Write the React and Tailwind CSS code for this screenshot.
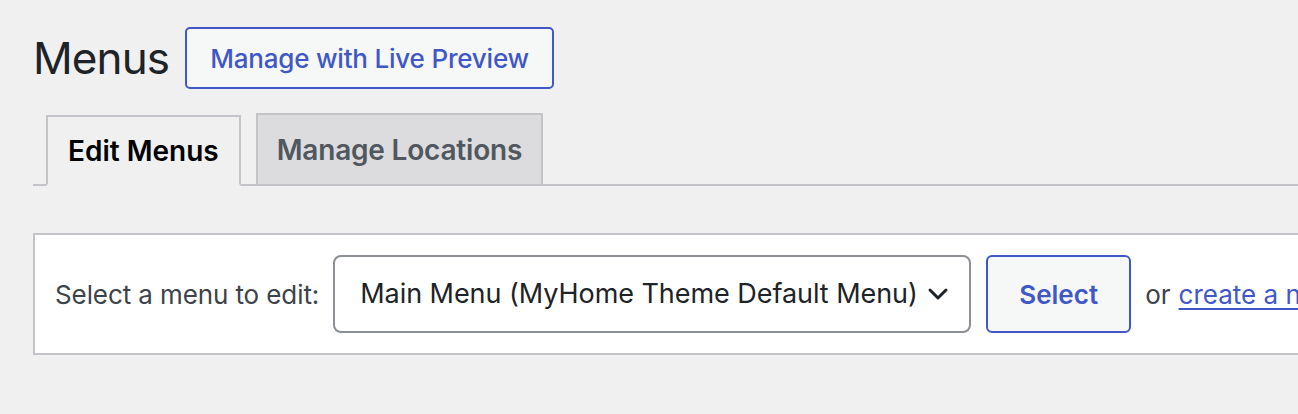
export default function App() {
    return (
        <div className="h-[414px] w-full overflow-hidden bg-[#f0f0f1] pl-[33px] text-[#1d2327]" style={{ fontFamily: 'Inter, "Noto Sans", sans-serif' }}>
            <div className="flex items-center pt-[27px]">
                <h1 className="text-[44px] font-normal leading-none tracking-[-0.9px] text-[#1d2327]">Menus</h1>
                <button className="ml-[16px] h-[62px] shrink-0 rounded-[5px] border-2 border-[#3f57c7] bg-[#f6f7f7] px-[23px] text-[26px] font-medium tracking-[-0.2px] text-[#3f57c7]">
                    Manage with Live Preview
                </button>
            </div>

            <div className="mt-[24px] flex items-end gap-[15px] border-b-2 border-[#c3c4c7] pl-[13px]">
                <div className="-mb-[2px] flex h-[71px] items-center border-2 border-b-2 border-[#c3c4c7] border-b-[#f0f0f1] bg-[#f0f0f1] px-[20px] text-[28px] font-semibold text-black">
                    Edit Menus
                </div>
                <div className="flex h-[71px] items-center border-2 border-b-0 border-[#c3c4c7] bg-[#dcdcde] px-[19px] text-[28px] font-semibold tracking-[-0.2px] text-[#50575e]">
                    Manage Locations
                </div>
            </div>

            <div className="mt-[47px] flex w-[1400px] items-center border-2 border-[#c3c4c7] bg-white py-[20px] pl-[20px] whitespace-nowrap">
                <span className="shrink-0 text-[26px] tracking-[-0.1px] text-[#3c434a]">Select a menu to edit:</span>
                <div className="ml-[14px] flex h-[78px] w-[638px] shrink-0 items-center justify-between rounded-[8px] border-2 border-[#8c8f94] pl-[25px] pr-[20px] text-[27px] tracking-[-0.05px] text-[#1d2327]">
                    <span>Main Menu (MyHome Theme Default Menu)</span>
                    <svg className="shrink-0" width="22" height="14" viewBox="0 0 22 14" fill="none" stroke="#1d2327" strokeWidth="3" strokeLinecap="round" strokeLinejoin="round">
                        <path d="M3 3l8 8 8-8" />
                    </svg>
                </div>
                <button className="ml-[15px] h-[78px] w-[145px] shrink-0 rounded-[6px] border-2 border-[#3f57c7] bg-[#f6f7f7] text-[26px] font-semibold text-[#3f57c7]">
                    Select
                </button>
                <span className="ml-[14px] shrink-0 text-[26px] text-[#3c434a]">or</span>
                <a href="#" className="ml-[8px] shrink-0 text-[26px] text-[#3f57c7] underline underline-offset-[4px]">create a new menu</a>
                <span className="shrink-0 text-[26px] text-[#3c434a]">. Do not forget to save your changes!</span>
            </div>
        </div>
    );
}
